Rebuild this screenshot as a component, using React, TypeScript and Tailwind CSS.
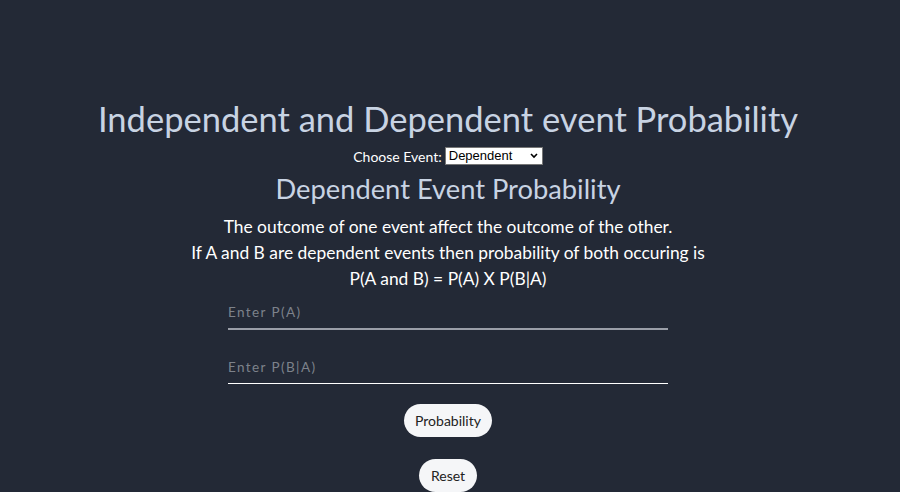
import React from "react";

export default function App() {
  const font = { fontFamily: "Lato, 'Open Sans', sans-serif" };
  return (
    <div className="min-h-[492px] w-full bg-[#232936] flex flex-col items-center pt-[97px] pr-[4px]" style={font}>
      <h1 className="text-[34.5px] leading-[44px] text-[#c8d3e3] font-normal">Independent and Dependent event Probability</h1>
      <div className="flex items-center gap-[3px] mt-[5px] h-[20px]">
        <span className="text-[14px] text-white">Choose Event:</span>
        <div className="relative w-[98px] h-[18px] bg-white border border-[#767676] flex items-center pl-[3px]">
          <span className="text-[13px] text-black" style={{ fontFamily: "Arial, 'Liberation Sans', sans-serif" }}>Dependent</span>
          <svg className="absolute right-[4px] top-[5px]" width="8" height="6" viewBox="0 0 8 6">
            <path d="M1 1 L4 4 L7 1" stroke="black" strokeWidth="1.6" fill="none" />
          </svg>
        </div>
      </div>
      <h2 className="text-[27.3px] leading-[34px] text-[#c8d3e3] mt-[6px]">Dependent Event Probability</h2>
      <div className="mt-[8px] flex flex-col items-center text-white text-[17.4px] leading-[26px]">
        <p>The outcome of one event affect the outcome of the other.</p>
        <p>If A and B are dependent events then probability of both occuring is</p>
        <p>P(A and B) = P(A) X P(B|A)</p>
      </div>
      <div className="w-[440px] mt-[8px] h-[30px] border-b-2 border-[#9a9ea8] flex items-end pb-[6px]">
        <span className="text-[13.5px] text-[#7d828b] tracking-[1.4px]">Enter P(A)</span>
      </div>
      <div className="w-[440px] mt-[24px] h-[30px] border-b border-white flex items-end pb-[6px]">
        <span className="text-[13.5px] text-[#7d828b] tracking-[1.4px]">Enter P(B|A)</span>
      </div>
      <button className="mt-[20px] w-[88px] h-[33px] rounded-full bg-[#f5f6f8] text-[14px] text-[#222]">Probability</button>
      <button className="mt-[22px] w-[58px] h-[33px] rounded-full bg-[#f5f6f8] text-[14px] text-[#222]">Reset</button>
    </div>
  );
}
